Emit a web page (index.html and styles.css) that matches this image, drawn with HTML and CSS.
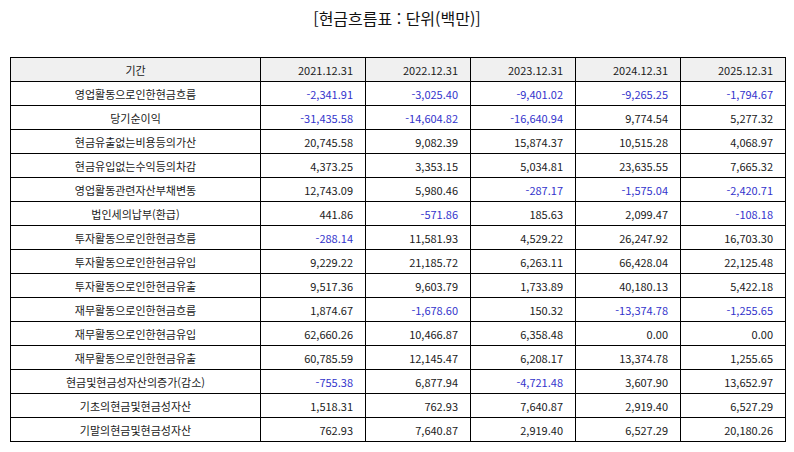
FILE: index.html
```html
<!DOCTYPE html>
<html lang="ko">
<head>
<meta charset="utf-8">
<title>현금흐름표</title>
<link rel="stylesheet" href="styles.css">
</head>
<body>
<div class="page">
  <h1 class="title">[현금흐름표 : 단위(백만)]</h1>
  <table class="cf">
    <colgroup>
      <col class="c-label"><col class="c-num"><col class="c-num"><col class="c-num"><col class="c-num"><col class="c-num">
    </colgroup>
    <thead>
      <tr><th class="lbl">기간</th><th>2021.12.31</th><th>2022.12.31</th><th>2023.12.31</th><th>2024.12.31</th><th>2025.12.31</th></tr>
    </thead>
    <tbody>
      <tr><td class="lbl">영업활동으로인한현금흐름</td><td class="neg">-2,341.91</td><td class="neg">-3,025.40</td><td class="neg">-9,401.02</td><td class="neg">-9,265.25</td><td class="neg">-1,794.67</td></tr>
      <tr><td class="lbl">당기순이익</td><td class="neg">-31,435.58</td><td class="neg">-14,604.82</td><td class="neg">-16,640.94</td><td>9,774.54</td><td>5,277.32</td></tr>
      <tr><td class="lbl">현금유출없는비용등의가산</td><td>20,745.58</td><td>9,082.39</td><td>15,874.37</td><td>10,515.28</td><td>4,068.97</td></tr>
      <tr><td class="lbl">현금유입없는수익등의차감</td><td>4,373.25</td><td>3,353.15</td><td>5,034.81</td><td>23,635.55</td><td>7,665.32</td></tr>
      <tr><td class="lbl">영업활동관련자산부채변동</td><td>12,743.09</td><td>5,980.46</td><td class="neg">-287.17</td><td class="neg">-1,575.04</td><td class="neg">-2,420.71</td></tr>
      <tr><td class="lbl">법인세의납부(환급)</td><td>441.86</td><td class="neg">-571.86</td><td>185.63</td><td>2,099.47</td><td class="neg">-108.18</td></tr>
      <tr><td class="lbl">투자활동으로인한현금흐름</td><td class="neg">-288.14</td><td>11,581.93</td><td>4,529.22</td><td>26,247.92</td><td>16,703.30</td></tr>
      <tr><td class="lbl">투자활동으로인한현금유입</td><td>9,229.22</td><td>21,185.72</td><td>6,263.11</td><td>66,428.04</td><td>22,125.48</td></tr>
      <tr><td class="lbl">투자활동으로인한현금유출</td><td>9,517.36</td><td>9,603.79</td><td>1,733.89</td><td>40,180.13</td><td>5,422.18</td></tr>
      <tr><td class="lbl">재무활동으로인한현금흐름</td><td>1,874.67</td><td class="neg">-1,678.60</td><td>150.32</td><td class="neg">-13,374.78</td><td class="neg">-1,255.65</td></tr>
      <tr><td class="lbl">재무활동으로인한현금유입</td><td>62,660.26</td><td>10,466.87</td><td>6,358.48</td><td>0.00</td><td>0.00</td></tr>
      <tr><td class="lbl">재무활동으로인한현금유출</td><td>60,785.59</td><td>12,145.47</td><td>6,208.17</td><td>13,374.78</td><td>1,255.65</td></tr>
      <tr><td class="lbl">현금및현금성자산의증가(감소)</td><td class="neg">-755.38</td><td>6,877.94</td><td class="neg">-4,721.48</td><td>3,607.90</td><td>13,652.97</td></tr>
      <tr><td class="lbl">기초의현금및현금성자산</td><td>1,518.31</td><td>762.93</td><td>7,640.87</td><td>2,919.40</td><td>6,527.29</td></tr>
      <tr><td class="lbl">기말의현금및현금성자산</td><td>762.93</td><td>7,640.87</td><td>2,919.40</td><td>6,527.29</td><td>20,180.26</td></tr>
    </tbody>
  </table>
</div>
</body>
</html>
```

FILE: styles.css
```css
html, body {
  margin: 0;
  padding: 0;
  background: #ffffff;
}

body {
  font-family: "Noto Sans CJK KR", "Noto Sans", sans-serif;
  color: #1a1a1a;
}

.page {
  width: 794px;
  padding-top: 6px;
}

.title {
  margin: 0 0 27px 0;
  font-size: 16px;
  font-weight: normal;
  line-height: 24px;
  text-align: center;
  color: #111111;
}

.cf {
  margin-left: 10px;
  width: 776px;
  border-collapse: collapse;
  table-layout: fixed;
  font-size: 11px;
}

.c-label { width: 250px; }
.c-num { width: 105px; }

.cf th,
.cf td {
  border: 1px solid #000000;
  height: 24px;
  padding: 0 12px 0 4px;
  text-align: right;
  font-weight: normal;
  line-height: 14px;
  white-space: nowrap;
  box-sizing: border-box;
}

.cf th {
  background: #f0f0f0;
}

.cf .lbl {
  text-align: center;
  padding: 0 4px;
}

.cf .neg {
  color: #3333cc;
}
```
